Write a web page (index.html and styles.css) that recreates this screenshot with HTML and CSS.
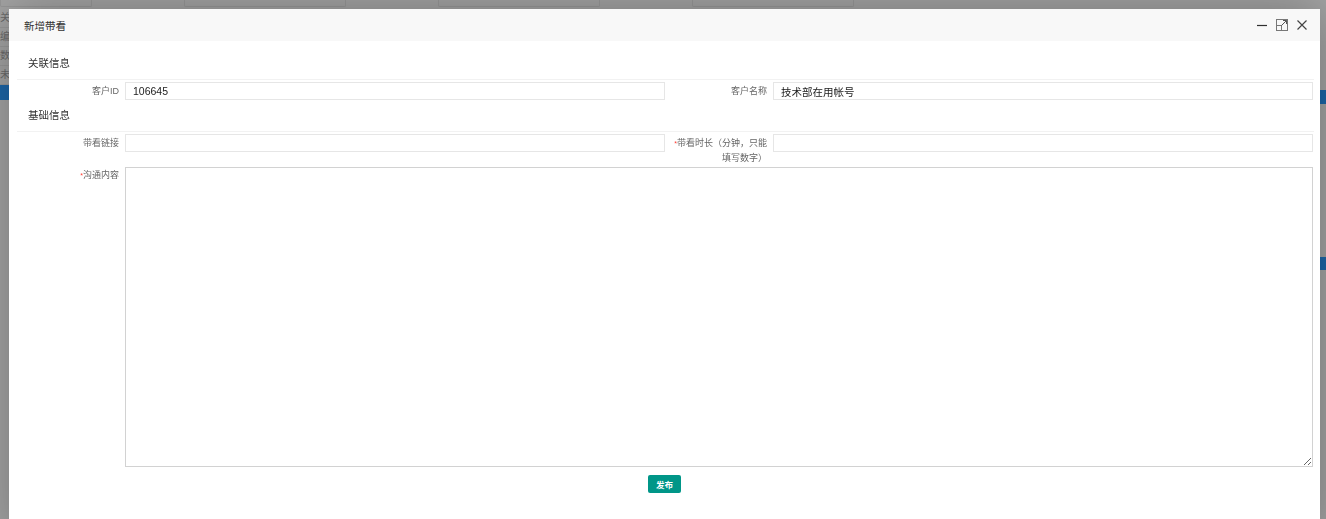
FILE: index.html
```html
<!DOCTYPE html>
<html lang="zh-CN">
<head>
  <meta charset="UTF-8">
  <title>新增带看</title>
  <link rel="stylesheet" href="styles.css">
</head>
<body>
  <div class="page">
    <div class="page-top">
      <span class="ghost-field"></span>
      <span class="ghost-field wide"></span>
      <span class="ghost-field wide"></span>
      <span class="ghost-field wide"></span>
    </div>
    <div class="page-side left">
      <span class="ghost-tag">关</span>
      <span class="ghost-tag">编</span>
      <span class="ghost-tag">数</span>
      <span class="ghost-tag">未</span>
      <span class="ghost-blue"></span>
    </div>
    <div class="page-side right">
      <span class="ghost-blue first"></span>
      <span class="ghost-blue second"></span>
    </div>
  </div>

  <div class="layer">
    <div class="layer-head">
      <span class="layer-title">新增带看</span>
      <div class="layer-tools">
        <svg class="tool" width="12" height="12" viewBox="0 0 12 12">
          <line x1="1" y1="6.5" x2="11" y2="6.5" stroke="#2f2f2f" stroke-width="1.2"/>
        </svg>
        <svg class="tool" width="12" height="12" viewBox="0 0 12 12">
          <rect x="0.5" y="0.5" width="11" height="11" fill="none" stroke="#777" stroke-width="1"/>
          <rect x="0.5" y="6.5" width="5" height="5" fill="none" stroke="#777" stroke-width="1"/>
          <line x1="5.5" y1="6.5" x2="10.5" y2="1.5" stroke="#555" stroke-width="1"/>
          <polyline points="7,1.5 10.5,1.5 10.5,5" fill="none" stroke="#555" stroke-width="1"/>
        </svg>
        <svg class="tool" width="12" height="12" viewBox="0 0 12 12">
          <path d="M1.5 1.5 L10.5 10.5 M10.5 1.5 L1.5 10.5" stroke="#444" stroke-width="1.2"/>
        </svg>
      </div>
    </div>

    <div class="layer-body">
      <div class="block-title first">关联信息</div>
      <div class="row">
        <div class="item">
          <label class="item-label">客户ID</label>
          <input class="item-input" type="text" value="106645">
        </div>
        <div class="item">
          <label class="item-label">客户名称</label>
          <input class="item-input" type="text" value="技术部在用帐号">
        </div>
      </div>

      <div class="block-title">基础信息</div>
      <div class="row">
        <div class="item">
          <label class="item-label">带看链接</label>
          <input class="item-input" type="text">
        </div>
        <div class="item">
          <label class="item-label"><span class="req">*</span>带看时长（分钟，只能填写数字）</label>
          <input class="item-input" type="text">
        </div>
      </div>
      <div class="row row-area">
        <div class="item full">
          <label class="item-label"><span class="req">*</span>沟通内容</label>
          <textarea class="item-textarea"></textarea>
        </div>
      </div>

      <div class="actions">
        <button class="btn">发布</button>
      </div>
    </div>
  </div>
</body>
</html>
```

FILE: styles.css
```css
html, body {
  margin: 0;
  height: 100%;
  overflow: hidden;
}
body {
  background: #a4a4a4;
  font-family: "Liberation Sans", "Noto Sans CJK SC", sans-serif;
  color: #333;
}

/* dimmed page behind the layer */
.page {
  height: 100%;
  position: relative;
}
.page-top {
  display: flex;
  gap: 12px;
  height: 9px;
}
.ghost-field {
  width: 90px;
  height: 6px;
  border: 1px solid #989898;
  border-top: none;
  border-radius: 0 0 2px 2px;
}
.ghost-field.wide {
  width: 160px;
  margin-left: 80px;
}
.page-side {
  position: absolute;
  top: 9px;
  width: 9px;
  display: flex;
  flex-direction: column;
}
.page-side.left {
  left: 0;
}
.page-side.right {
  right: 0;
  width: 6px;
}
.ghost-tag {
  height: 18px;
  font-size: 10px;
  line-height: 18px;
  color: #6a6a6a;
  overflow: hidden;
  border-bottom: 1px solid #999;
}
.ghost-blue {
  display: block;
  height: 15px;
  background: #1d66a8;
}
.page-side.right .first {
  margin-top: 81px;
  height: 14px;
}
.page-side.right .second {
  margin-top: 153px;
  height: 13px;
}

/* the layer */
.layer {
  position: fixed;
  top: 9px;
  left: 9px;
  right: 6px;
  bottom: -20px;
  background: #fff;
  box-shadow: 1px 1px 50px rgba(0, 0, 0, 0.3);
}
.layer-head {
  height: 32px;
  background: #f8f8f8;
  display: flex;
  align-items: center;
  justify-content: space-between;
  padding: 0 12px 0 15px;
}
.layer-title {
  font-size: 10.5px;
  color: #333;
}
.layer-tools {
  display: flex;
  gap: 8px;
  align-items: center;
}
.tool {
  display: block;
}

.layer-body {
  padding: 7px 6px 0 8px;
}
.block-title {
  height: 31px;
  line-height: 31px;
  padding-left: 11px;
  font-size: 10.5px;
  color: #333;
  border-bottom: 1px solid #f2f2f2;
}
.row {
  display: flex;
  margin-top: 2px;
}
.row-area {
  margin-top: 1px;
}
.item {
  display: flex;
  align-items: flex-start;
  width: 648px;
}
.item.full {
  width: 1296px;
}
.item-label {
  width: 108px;
  box-sizing: border-box;
  padding: 1.5px 6px 0 4px;
  text-align: right;
  font-size: 9px;
  line-height: 15px;
  color: #666;
  flex-shrink: 0;
}
.req {
  color: #ff3b30;
  font-size: 7px;
  vertical-align: top;
}
.item-input {
  width: 540px;
  height: 18px;
  box-sizing: border-box;
  border: 1px solid #e6e6e6;
  padding: 0 7px;
  font-family: "Liberation Sans", "Noto Sans CJK SC", sans-serif;
  font-size: 10.5px;
  color: #222;
  outline: none;
  margin: 0;
}
.item-textarea {
  width: 1188px;
  height: 300px;
  box-sizing: border-box;
  border: 1px solid #d2d2d2;
  margin: 0;
  padding: 4px 7px;
  font-size: 10.5px;
  outline: none;
}
.actions {
  display: flex;
  justify-content: center;
  padding-top: 8px;
  margin-left: -8px;
  margin-right: -6px;
}
.btn {
  width: 33px;
  height: 18px;
  padding: 0;
  border: none;
  border-radius: 2px;
  background: #009688;
  color: #fff;
  font-family: "Liberation Sans", "Noto Sans CJK SC", sans-serif;
  font-size: 8.5px;
  font-weight: bold;
  cursor: pointer;
}
```
